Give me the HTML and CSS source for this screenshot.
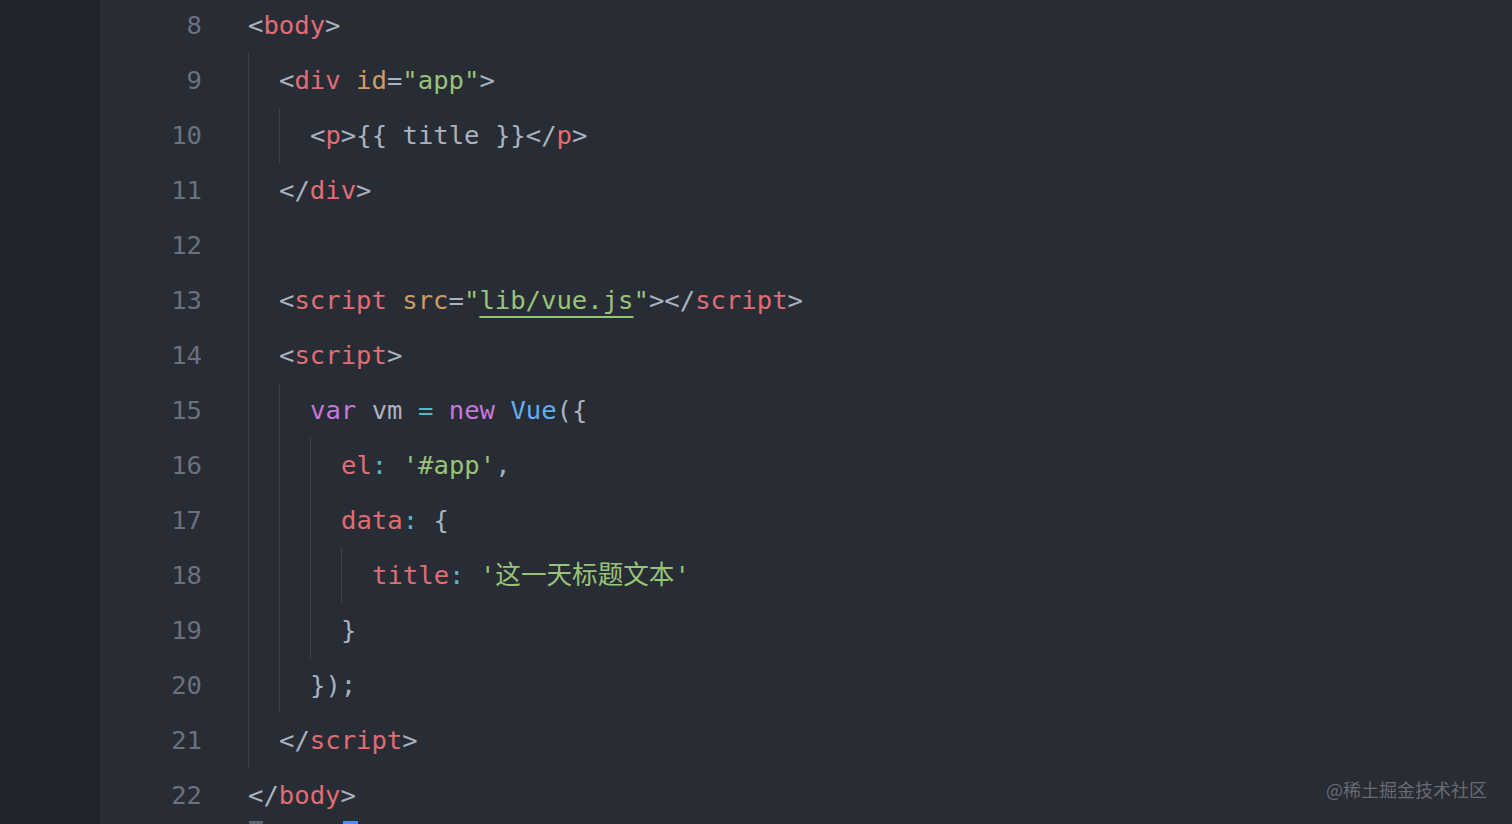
FILE: index.html
```html
<!DOCTYPE html>
<html lang="zh">
<head>
<meta charset="utf-8">
<title>Editor</title>
<link rel="stylesheet" href="styles.css">
</head>
<body>
<div class="editor">
  <div class="strip"></div>
  <div class="lines">
    <div class="row"><div class="num">8</div><div class="code"><span class="txt"><span class="p">&lt;</span><span class="t">body</span><span class="p">&gt;</span></span></div></div>
    <div class="row"><div class="num">9</div><div class="code"><span class="guide"></span><span class="txt"><span class="p">&lt;</span><span class="t">div</span> <span class="a">id</span><span class="p">=</span><span class="s">"app"</span><span class="p">&gt;</span></span></div></div>
    <div class="row"><div class="num">10</div><div class="code"><span class="guide"></span><span class="guide"></span><span class="txt"><span class="p">&lt;</span><span class="t">p</span><span class="p">&gt;{{ title }}&lt;/</span><span class="t">p</span><span class="p">&gt;</span></span></div></div>
    <div class="row"><div class="num">11</div><div class="code"><span class="guide"></span><span class="txt"><span class="p">&lt;/</span><span class="t">div</span><span class="p">&gt;</span></span></div></div>
    <div class="row"><div class="num">12</div><div class="code"><span class="guide"></span><span class="txt"></span></div></div>
    <div class="row"><div class="num">13</div><div class="code"><span class="guide"></span><span class="txt"><span class="p">&lt;</span><span class="t">script</span> <span class="a">src</span><span class="p">=</span><span class="s">"<span class="u">lib/vue.js</span>"</span><span class="p">&gt;&lt;/</span><span class="t">script</span><span class="p">&gt;</span></span></div></div>
    <div class="row"><div class="num">14</div><div class="code"><span class="guide"></span><span class="txt"><span class="p">&lt;</span><span class="t">script</span><span class="p">&gt;</span></span></div></div>
    <div class="row"><div class="num">15</div><div class="code"><span class="guide"></span><span class="guide"></span><span class="txt"><span class="k">var</span><span class="p"> vm </span><span class="o">=</span> <span class="k">new</span> <span class="f">Vue</span><span class="p">({</span></span></div></div>
    <div class="row"><div class="num">16</div><div class="code"><span class="guide"></span><span class="guide"></span><span class="guide"></span><span class="txt"><span class="t">el</span><span class="o">:</span> <span class="s">'#app'</span><span class="p">,</span></span></div></div>
    <div class="row"><div class="num">17</div><div class="code"><span class="guide"></span><span class="guide"></span><span class="guide"></span><span class="txt"><span class="t">data</span><span class="o">:</span> <span class="p">{</span></span></div></div>
    <div class="row"><div class="num">18</div><div class="code"><span class="guide"></span><span class="guide"></span><span class="guide"></span><span class="guide"></span><span class="txt"><span class="t">title</span><span class="o">:</span> <span class="s">'这一天标题文本'</span></span></div></div>
    <div class="row"><div class="num">19</div><div class="code"><span class="guide"></span><span class="guide"></span><span class="guide"></span><span class="txt"><span class="p">}</span></span></div></div>
    <div class="row"><div class="num">20</div><div class="code"><span class="guide"></span><span class="guide"></span><span class="txt"><span class="p">});</span></span></div></div>
    <div class="row"><div class="num">21</div><div class="code"><span class="guide"></span><span class="txt"><span class="p">&lt;/</span><span class="t">script</span><span class="p">&gt;</span></span></div></div>
    <div class="row"><div class="num">22</div><div class="code"><span class="txt"><span class="p">&lt;/</span><span class="t">body</span><span class="p">&gt;</span></span></div></div>
    <div class="row"><div class="num"></div><div class="code"><span class="mark mark-grey"></span><span class="mark mark-blue"></span></div></div>
  </div>
</div>
<div class="watermark">@稀土掘金技术社区</div>
</body>
</html>
```
FILE: styles.css
```css
html, body {
  margin: 0;
  padding: 0;
  height: 824px;
  overflow: hidden;
  background: #282c34;
}

.editor {
  display: flex;
  height: 824px;
  overflow: hidden;
}

.strip {
  width: 100px;
  flex: 0 0 100px;
  background: #21252b;
}

.lines {
  display: flex;
  flex-direction: column;
  margin-top: -2px;
}

.row {
  display: flex;
  height: 55px;
  flex: 0 0 55px;
  font-family: "DejaVu Sans Mono", "Noto Sans CJK SC", monospace;
  font-size: 25.6px;
  line-height: 55px;
}

.num {
  width: 102px;
  text-align: right;
  color: #6b717e;
}

.code {
  display: flex;
  margin-left: 46px;
  height: 55px;
}

.guide {
  display: inline-block;
  width: 31px;
  height: 55px;
  box-sizing: border-box;
  border-left: 1px solid #3b4049;
}

.txt {
  white-space: pre;
  color: #abb2bf;
}

.p { color: #abb2bf; }
.t { color: #e06c75; }
.a { color: #d19a66; }
.s { color: #98c379; }
.k { color: #c678dd; }
.f { color: #61afef; }
.o { color: #56b6c2; }

.u {
  text-decoration: underline;
  text-decoration-thickness: 1.5px;
  text-underline-offset: 7px;
  text-decoration-color: #98c379;
}

.mark {
  display: inline-block;
  height: 6px;
  margin-top: -2px;
}

.mark-grey {
  width: 14px;
  background: #5c6370;
  margin-left: 1px;
}

.mark-blue {
  width: 15px;
  margin-left: 80px;
  background: #528bff;
}

.watermark {
  position: absolute;
  right: 25px;
  bottom: 23px;
  font-family: "Noto Sans CJK SC", sans-serif;
  font-size: 18px;
  line-height: 24px;
  color: #676a72;
}
```
